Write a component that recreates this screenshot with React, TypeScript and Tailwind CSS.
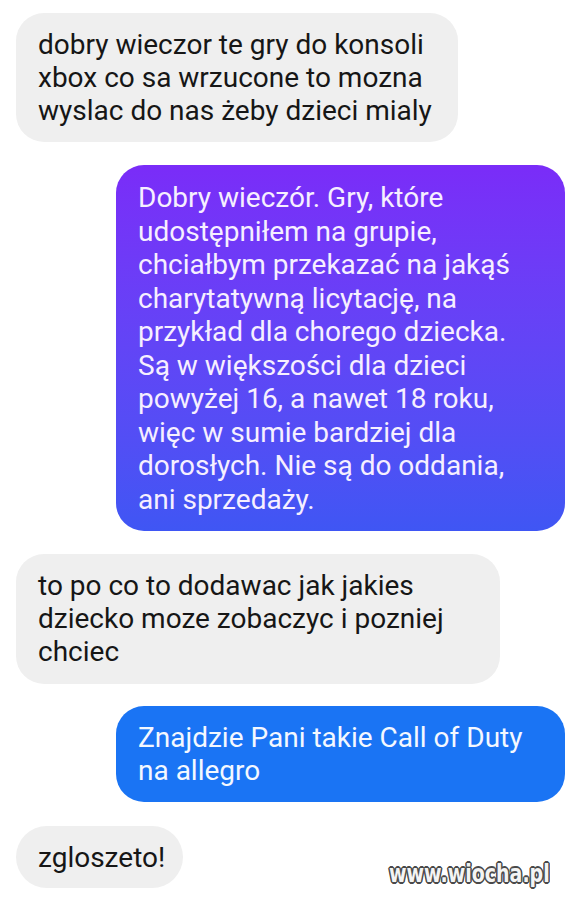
import React from "react";

const font = { fontFamily: "Roboto, 'Noto Sans', sans-serif" };

function Lines({ lines }: { lines: string[] }) {
  return (
    <>
      {lines.map((l, i) => (
        <div key={i} className="whitespace-nowrap">
          {l}
        </div>
      ))}
    </>
  );
}

export default function App() {
  return (
    <div
      className="w-[570px] h-[900px] bg-white relative overflow-hidden flex flex-col pt-[13px] text-[28px] leading-[33px]"
      style={font}
    >
      <div className="ml-[16px] w-[442px] rounded-[28px] bg-[#efefef] text-[#161616] pl-[22px] pt-[15px] pb-[15px]">
        <Lines
          lines={[
            "dobry wieczor te gry do konsoli",
            "xbox co sa wrzucone to mozna",
            "wyslac do nas żeby dzieci mialy",
          ]}
        />
      </div>

      <div className="mt-[23px] ml-[116px] w-[449px] rounded-[28px] bg-gradient-to-b from-[#7a2cf8] to-[#3f56f4] text-[#f6efff] pl-[22px] pt-[16px] pb-[15px] leading-[33.5px]">
        <Lines
          lines={[
            "Dobry wieczór. Gry, które",
            "udostępniłem na grupie,",
            "chciałbym przekazać na jakąś",
            "charytatywną licytację, na",
            "przykład dla chorego dziecka.",
            "Są w większości dla dzieci",
            "powyżej 16, a nawet 18 roku,",
            "więc w sumie bardziej dla",
            "dorosłych. Nie są do oddania,",
            "ani sprzedaży.",
          ]}
        />
      </div>

      <div className="mt-[23px] ml-[16px] w-[484px] rounded-[28px] bg-[#efefef] text-[#161616] pl-[22px] pt-[15px] pb-[16px]">
        <Lines
          lines={[
            "to po co to dodawac jak jakies",
            "dziecko moze zobaczyc i pozniej",
            "chciec",
          ]}
        />
      </div>

      <div className="mt-[22px] ml-[116px] w-[449px] rounded-[28px] bg-[#1a74f4] text-[#f4f8ff] pl-[22px] pt-[15px] pb-[15px]">
        <Lines lines={["Znajdzie Pani takie Call of Duty", "na allegro"]} />
      </div>

      <div className="mt-[24px] ml-[16px] w-[167px] rounded-[31px] bg-[#efefef] text-[#161616] pl-[22px] pt-[15px] pb-[14px]">
        <Lines lines={["zgloszeto!"]} />
      </div>

      <div
        className="absolute left-[389px] top-[860px] text-[19px] leading-[20px] font-bold text-[#f4f4f4] scale-y-[1.3] origin-top [text-shadow:1.5px_0_0_#4a4a4a,-1.5px_0_0_#4a4a4a,0_1.5px_0_#4a4a4a,0_-1.5px_0_#4a4a4a,1px_1px_0_#4a4a4a,-1px_-1px_0_#4a4a4a,1px_-1px_0_#4a4a4a,-1px_1px_0_#4a4a4a]"
        style={{ fontFamily: "'DejaVu Sans', sans-serif" }}
      >
        www.wiocha.pl
      </div>
    </div>
  );
}
